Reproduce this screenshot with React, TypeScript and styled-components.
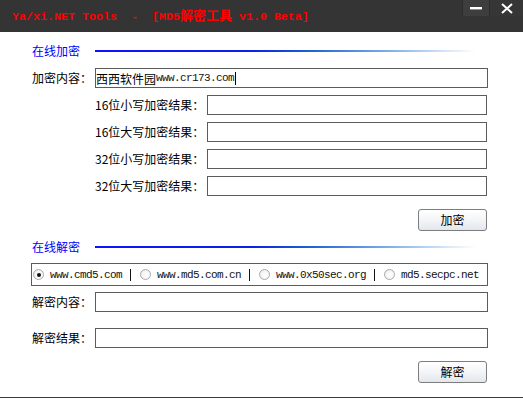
import React from "react";
import styled, { createGlobalStyle, css } from "styled-components";

const GlobalStyle = createGlobalStyle`
  html, body { margin: 0; padding: 0; background: #ffffff; }
  body { font-family: "Noto Sans CJK SC", "Noto Sans", sans-serif; font-size: 12px; color: #000; }
  * { box-sizing: border-box; }
`;

const Window = styled.div`
  width: 523px;
  height: 398px;
  background: #ffffff;
  border-bottom: 1px solid #3a3a3a;
  display: flex;
  flex-direction: column;
`;

const TitleBar = styled.div`
  height: 32px;
  flex: none;
  background: #343434;
  display: flex;
  align-items: flex-start;
  justify-content: space-between;
`;

const TitleText = styled.div`
  padding-left: 12px;
  line-height: 30px;
  height: 30px;
  color: #ff0000;
  font-family: "Liberation Mono", monospace;
  font-weight: bold;
  font-size: 11.67px;
  white-space: pre;
`;

const TitleCJK = styled.span`
  font-family: "Noto Sans CJK SC", sans-serif;
  font-size: 13px;
  font-weight: bold;
`;

const WindowButtons = styled.div`
  display: flex;
`;

const WinButton = styled.div<{ $w: number; $bg: string }>`
  width: ${(p) => p.$w}px;
  height: 16px;
  background: ${(p) => p.$bg};
  display: flex;
  align-items: center;
  justify-content: center;
  border-left: 1px solid #2b2b2b;
`;

const Content = styled.div`
  padding: 0 35px 0 32px;
  display: flex;
  flex-direction: column;
`;

const SectionHeader = styled.div<{ $mt: number }>`
  display: flex;
  align-items: center;
  height: 14px;
  margin-top: ${(p) => p.$mt}px;
`;

const SectionTitle = styled.div`
  width: 63px;
  color: #0000ff;
  font-size: 12px;
  line-height: 14px;
  white-space: nowrap;
`;

const SectionLine = styled.div`
  flex: 1;
  height: 2px;
  margin-top: -1px;
  background: linear-gradient(
    to right,
    #1010ff 0%,
    #0a22e6 40%,
    #1e63d2 55%,
    #7fb0e8 75%,
    #d8e8f8 90%,
    rgba(255, 255, 255, 0) 97%
  );
`;

const Row = styled.div<{ $mt: number; $indent?: number }>`
  display: flex;
  align-items: center;
  height: 20px;
  margin-top: ${(p) => p.$mt}px;
  padding-left: ${(p) => p.$indent ?? 0}px;
`;

const Label = styled.div<{ $w: number }>`
  width: ${(p) => p.$w}px;
  flex: none;
  font-size: 12px;
  line-height: 20px;
  white-space: nowrap;
  color: #000;
`;

const boxCss = css`
  height: 20px;
  border: 1px solid #5c5c5c;
  background: #ffffff;
  margin: 0;
`;

const TextBox = styled.input<{ $w?: number }>`
  ${boxCss};
  ${(p) => (p.$w ? `width: ${p.$w}px; flex: none;` : "flex: 1; min-width: 0;")}
  padding: 0 2px;
  outline: none;
  font-size: 12px;
`;

const FilledBox = styled.div`
  ${boxCss};
  flex: 1;
  display: flex;
  align-items: center;
  padding: 0;
  white-space: pre;
`;

const CJKText = styled.span`
  font-family: "Noto Sans CJK SC", sans-serif;
  font-size: 12px;
`;

const MonoText = styled.span`
  font-family: "Liberation Mono", monospace;
  font-size: 11px;
  letter-spacing: -0.6px;
  color: #111;
`;

const Caret = styled.span`
  display: inline-block;
  width: 1px;
  height: 13px;
  background: #000;
  margin-left: 1px;
`;

const ButtonRow = styled.div<{ $mt: number }>`
  display: flex;
  justify-content: flex-end;
  padding-right: 1px;
  margin-top: ${(p) => p.$mt}px;
`;

const Button = styled.button`
  width: 69px;
  height: 22px;
  border: 1px solid #7d7d7d;
  border-radius: 3px;
  background: linear-gradient(to bottom, #ffffff 0%, #f3f5f7 50%, #e3e7ec 100%);
  font-family: "Noto Sans CJK SC", sans-serif;
  font-size: 12px;
  color: #000;
  padding: 0;
  line-height: 20px;
`;

const RadioBox = styled.div`
  height: 23px;
  margin-top: 9px;
  margin-left: -1px;
  border: 1px solid #5c5c5c;
  display: flex;
  align-items: center;
  padding-left: 1px;
`;

const RadioItem = styled.label`
  display: flex;
  align-items: center;
`;

const RadioCircle = styled.span<{ $checked?: boolean }>`
  width: 11px;
  height: 11px;
  border-radius: 50%;
  border: 1px solid #a9a9a9;
  background: radial-gradient(circle at 60% 60%, #ffffff 0%, #f4f4f4 60%, #dcdcdc 100%);
  display: flex;
  align-items: center;
  justify-content: center;
  margin-right: 6px;
  &::after {
    content: "";
    display: ${(p) => (p.$checked ? "block" : "none")};
    width: 4px;
    height: 4px;
    border-radius: 50%;
    background: #111;
  }
`;

const RadioText = styled.span`
  font-family: "Liberation Mono", monospace;
  font-size: 11px;
  letter-spacing: -0.6px;
  color: #111;
  white-space: pre;
`;

const Sep = styled.span`
  width: 1px;
  height: 12px;
  background: #111;
  margin: 0 9px 0 8px;
`;

const sites = ["www.cmd5.com", "www.md5.com.cn", "www.0x50sec.org", "md5.secpc.net"];
const encLabels = ["16位小写加密结果：", "16位大写加密结果：", "32位小写加密结果：", "32位大写加密结果："];

export default function App() {
  return (
    <>
      <GlobalStyle />
      <Window>
        <TitleBar>
          <TitleText>
            {"Ya/xi.NET Tools  -  [MD5"}
            <TitleCJK>解密工具</TitleCJK>
            {" v1.0 Beta]"}
          </TitleText>
          <WindowButtons>
            <WinButton $w={27} $bg="#3e3e3e">
              <svg width="12" height="3" viewBox="0 0 12 3">
                <rect x="0" y="0" width="12" height="2.4" fill="#ffffff" />
              </svg>
            </WinButton>
            <WinButton $w={34} $bg="#363636">
              <svg width="12" height="11" viewBox="0 0 12 11">
                <path d="M1 1 L11 10 M11 1 L1 10" stroke="#ffffff" strokeWidth="2" />
              </svg>
            </WinButton>
          </WindowButtons>
        </TitleBar>
        <Content>
          <SectionHeader $mt={12}>
            <SectionTitle>在线加密</SectionTitle>
            <SectionLine />
          </SectionHeader>
          <Row $mt={10}>
            <Label $w={63}>加密内容：</Label>
            <FilledBox>
              <CJKText>西西软件园</CJKText>
              <MonoText>www.cr173.com</MonoText>
              <Caret />
            </FilledBox>
          </Row>
          {encLabels.map((l) => (
            <Row key={l} $mt={7} $indent={63}>
              <Label $w={112}>{l}</Label>
              <TextBox $w={280} />
            </Row>
          ))}
          <ButtonRow $mt={13}>
            <Button>加密</Button>
          </ButtonRow>
          <SectionHeader $mt={9}>
            <SectionTitle>在线解密</SectionTitle>
            <SectionLine />
          </SectionHeader>
          <RadioBox>
            {sites.map((s, i) => (
              <React.Fragment key={s}>
                {i > 0 && <Sep />}
                <RadioItem>
                  <RadioCircle $checked={i === 0} />
                  <RadioText>{s}</RadioText>
                </RadioItem>
              </React.Fragment>
            ))}
          </RadioBox>
          <Row $mt={6}>
            <Label $w={63}>解密内容：</Label>
            <TextBox />
          </Row>
          <Row $mt={16}>
            <Label $w={63}>解密结果：</Label>
            <TextBox />
          </Row>
          <ButtonRow $mt={13}>
            <Button>解密</Button>
          </ButtonRow>
        </Content>
      </Window>
    </>
  );
}
